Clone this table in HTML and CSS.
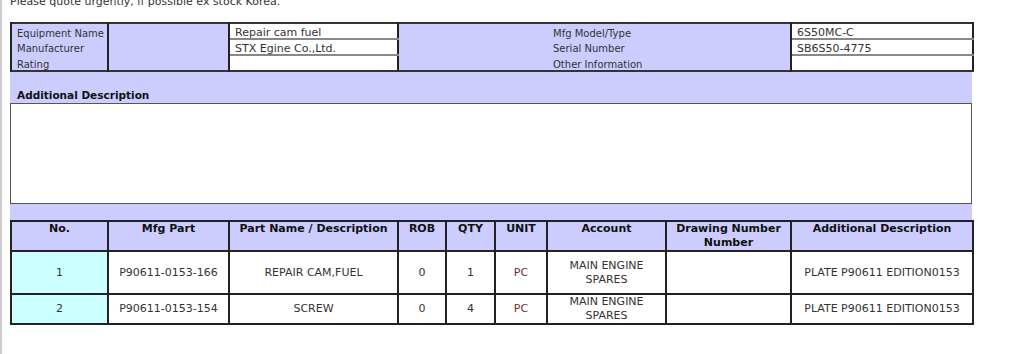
FILE: index.html
```html
<!DOCTYPE html>
<html lang="en">
<head>
    <meta charset="UTF-8">
    <meta name="viewport" content="width=device-width, initial-scale=1.0">
    <title>Requisition - Parts Quote</title>
    <link rel="stylesheet" href="styles.css">
</head>
<body>
    <div class="page">
        <p class="note">Please quote urgently, if possible ex stock Korea.</p>

        <table class="equip">
            <colgroup>
                <col style="width:97px">
                <col style="width:121px">
                <col style="width:169px">
                <col style="width:393px">
                <col style="width:182px">
            </colgroup>
            <tr>
                <td class="label">Equipment Name</td>
                <td class="blank" rowspan="3"></td>
                <td class="value">Repair cam fuel</td>
                <td class="label right">Mfg Model/Type</td>
                <td class="value">6S50MC-C</td>
            </tr>
            <tr>
                <td class="label">Manufacturer</td>
                <td class="value">STX Egine Co.,Ltd.</td>
                <td class="label right">Serial Number</td>
                <td class="value">SB6S50-4775</td>
            </tr>
            <tr>
                <td class="label">Rating</td>
                <td class="value"></td>
                <td class="label right">Other Information</td>
                <td class="value"></td>
            </tr>
        </table>

        <div class="band">Additional Description</div>
        <div class="desc-box"></div>
        <div class="band thin"></div>

        <table class="parts">
            <colgroup>
                <col style="width:97px">
                <col style="width:121px">
                <col style="width:169px">
                <col style="width:48px">
                <col style="width:49px">
                <col style="width:52px">
                <col style="width:119px">
                <col style="width:125px">
                <col style="width:182px">
            </colgroup>
            <thead>
                <tr>
                    <th>No.</th>
                    <th>Mfg Part</th>
                    <th>Part Name / Description</th>
                    <th>ROB</th>
                    <th>QTY</th>
                    <th>UNIT</th>
                    <th>Account</th>
                    <th>Drawing Number<br>Number</th>
                    <th>Additional Description</th>
                </tr>
            </thead>
            <tbody>
                <tr class="tall">
                    <td class="no">1</td>
                    <td>P90611-0153-166</td>
                    <td>REPAIR CAM,FUEL</td>
                    <td>0</td>
                    <td>1</td>
                    <td class="unit">PC</td>
                    <td>MAIN ENGINE<br>SPARES</td>
                    <td></td>
                    <td>PLATE P90611 EDITION0153</td>
                </tr>
                <tr>
                    <td class="no">2</td>
                    <td>P90611-0153-154</td>
                    <td>SCREW</td>
                    <td>0</td>
                    <td>4</td>
                    <td class="unit">PC</td>
                    <td>MAIN ENGINE<br>SPARES</td>
                    <td></td>
                    <td>PLATE P90611 EDITION0153</td>
                </tr>
            </tbody>
        </table>
    </div>
</body>
</html>
```

FILE: styles.css
```css
body {
    margin: 0;
    font-family: 'DejaVu Sans', Verdana, sans-serif;
    font-size: 11px;
    color: #333;
    background: #fff;
}
.page {
    border-left: 2px solid #ccc;
    padding: 0 0 30px 8px;
    min-height: 354px;
    box-sizing: border-box;
}
.note {
    margin: -5px 0 0;
    line-height: 13px;
    height: 27px;
}
.equip,
.parts {
    width: 962px;
    table-layout: fixed;
    border-collapse: collapse;
    border: 2px solid #333;
}
.equip td {
    height: 14px;
    padding: 0 5px;
    line-height: 14px;
    vertical-align: middle;
    white-space: nowrap;
}
.equip .label,
.equip .blank {
    background-color: #ccccff;
    border-left: 2px solid #222;
    border-right: 2px solid #222;
    font-size: 10px;
}
.equip .label {
    padding-top: 3px;
    line-height: 11px;
    height: 11px;
}
.equip .label.right {
    padding-left: 154px;
}
.equip .value {
    padding-top: 3px;
    line-height: 11px;
    height: 11px;
    background-color: #fff;
    border: 2px solid #888;
    border-left-color: #222;
    border-right-color: #222;
}
.equip tr:first-child .value {
    border-top-color: #333;
}
.equip tr:last-child .value {
    border-bottom-color: #333;
}
.band {
    width: 948px;
    height: 13px;
    padding: 17px 7px 1px;
    background-color: #ccccff;
    font-size: 10.5px;
    font-weight: bold;
    color: #111;
    line-height: 13px;
}
.band.thin {
    height: 16px;
    padding: 0 7px;
}
.desc-box {
    width: 960px;
    height: 99px;
    border: 1px solid #555;
    background: #fff;
}
.parts th,
.parts td {
    border: 2px solid #222;
    text-align: center;
    padding: 0 3px;
}
.parts th {
    background-color: #ccccff;
    color: #111;
    height: 27px;
    vertical-align: top;
    line-height: 14px;
    padding-top: 0;
}
.parts td {
    height: 28px;
    line-height: 14px;
    vertical-align: middle;
    background: #fff;
}
.parts tbody tr + tr td {
    border-top-color: #777;
}
.parts .tall td {
    height: 41px;
}
.parts td.no {
    background-color: #ccffff;
}
.parts td.unit {
    color: #633;
}
```
